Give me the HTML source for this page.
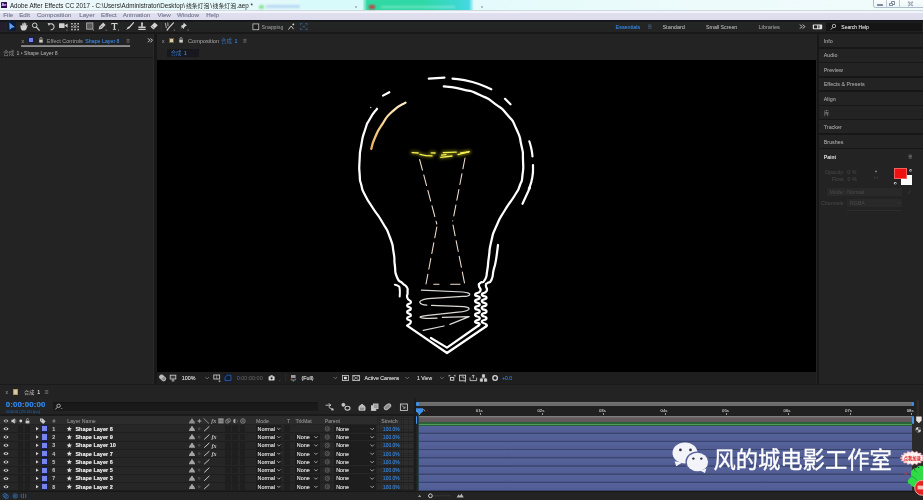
<!DOCTYPE html>
<html>
<head>
<meta charset="utf-8">
<title>Adobe After Effects CC 2017</title>
<style>
*{margin:0;padding:0;box-sizing:border-box}
html,body{width:923px;height:500px;overflow:hidden;background:#181818}
body{font-family:"Liberation Sans",sans-serif;font-size:5.6px;color:#9a9a9a;position:relative;line-height:1}
.a{position:absolute}
.t{position:absolute;white-space:nowrap;line-height:1;text-shadow:0 0 .45px currentColor}
#titlebar{left:0;top:0;width:923px;height:10px;background:linear-gradient(90deg,#eef7fb 0,#e4f9fa 250px,#dffafa 360px,#e6fbfb 520px,#edfbfb 700px,#f1fbfc 923px)}
#menubar{left:0;top:10px;width:923px;height:9.8px;background:linear-gradient(180deg,#cddadc 0,#cddadc .7px,#f5f5fc 1.1px,#f3f3fb 2.5px,#dfdfee 3.5px,#dcdcec 9.8px)}
#toolbar{left:0;top:19.8px;width:923px;height:12.2px;background:linear-gradient(180deg,#15161a 0,#15161a 1.4px,#242525 2px,#232323 12.2px)}
#leftp{left:0;top:33.5px;width:154px;height:350.3px;background:#232323}
#compp{left:157.3px;top:33.5px;width:659.5px;height:350.3px;background:#232323}
#rightp{left:819px;top:33.5px;width:104px;height:350.3px;background:#232323}
#viewer{left:157.3px;top:59.5px;width:659px;height:312.5px;background:#000}
#tl{left:0;top:385.2px;width:923px;height:114.8px;background:#232323}
svg{position:absolute;left:0;top:0;overflow:visible}
</style>
</head>
<body>
<div id="root" style="position:absolute;left:0;top:0;width:923px;height:500px;will-change:transform">
<div id="titlebar" class="a"></div>
<div id="menubar" class="a"></div>
<div id="toolbar" class="a"></div>
<div id="leftp" class="a"></div>
<div id="compp" class="a"></div>
<div id="rightp" class="a"></div>
<div id="viewer" class="a"></div>
<div id="tl" class="a"></div>
<svg style="filter:blur(.3px)" width="923" height="500" viewBox="0 0 923 500"><defs><linearGradient id="warm" gradientUnits="userSpaceOnUse" x1="405" y1="102" x2="371" y2="149"><stop offset="0" stop-color="#fdeecb"/><stop offset=".5" stop-color="#f7d596"/><stop offset="1" stop-color="#f0b458"/></linearGradient><filter id="glow" x="-30%" y="-300%" width="160%" height="700%"><feGaussianBlur stdDeviation="1.6"/></filter></defs><path d="M377.0 108.8C374.4 112.5 374.4 111.0 370.0 118.8C365.6 126.6 368.2 120.4 365.0 130.0C361.8 139.6 363.3 134.0 361.3 145.0C359.3 156.0 360.2 149.0 359.6 160.0C359.0 171.0 359.1 165.8 359.7 175.0C360.3 184.2 359.4 177.7 361.3 185.0C363.2 192.3 360.9 186.8 365.0 195.0C369.1 203.2 366.1 197.4 372.5 207.5C378.9 217.6 376.1 211.5 382.5 222.5C388.9 233.5 385.9 226.5 390.0 237.5C394.1 248.5 391.8 242.4 393.6 252.5C395.4 262.6 393.6 256.0 394.8 265.0C396.0 274.0 394.1 270.3 396.9 277.0C399.7 283.7 398.9 279.6 402.5 283.3C406.1 287.0 404.8 283.8 406.7 287.0C408.6 290.2 407.3 288.0 407.6 292.0C407.9 296.0 406.2 294.3 407.4 298.0C408.6 301.7 411.0 299.4 410.9 302.2C410.8 304.9 407.1 303.1 407.1 305.5C407.1 307.9 410.9 306.3 410.9 308.7C410.9 311.1 407.1 309.6 407.1 312.0C407.1 314.4 410.9 312.9 410.9 315.2C410.9 317.5 407.1 316.0 407.1 318.4C407.1 320.8 410.9 319.2 410.9 321.8C410.9 324.4 408.5 324.2 407.1 325.6L447 353 L485.6 326.8" fill="none" stroke="#ffffff" stroke-width="2.25" stroke-linecap="round" stroke-linejoin="round" />
<path d="M485.6 326.8C485.9 326.0 487.8 326.4 486.4 324.5C485.0 322.6 481.8 323.9 481.8 321.6C481.8 319.3 486.5 320.7 486.5 318.2C486.5 315.7 481.8 317.3 481.8 314.8C481.8 312.3 486.5 313.9 486.5 311.4C486.5 308.9 481.8 310.4 481.8 307.9C481.8 305.4 486.5 307.0 486.5 304.5C486.5 302.0 481.8 303.6 481.8 301.1C481.8 298.6 486.5 300.2 486.5 297.8C486.5 295.4 481.8 297.0 481.8 294.5C481.8 292.0 485.1 294.3 486.6 291.0C488.1 287.7 485.6 288.4 485.9 285.5C486.2 282.6 485.4 285.1 487.5 283.0C489.6 280.9 489.3 284.6 491.5 279.8C493.7 275.0 492.1 276.3 493.6 270.0C495.1 263.7 494.3 268.7 495.5 262.5C496.7 256.3 496.1 259.4 497.0 253.0C497.9 246.6 497.6 247.9 498.0 245.0" fill="none" stroke="#ffffff" stroke-width="2.25" stroke-linecap="round" stroke-linejoin="round" />
<path d="M430.9 338 L447 347.6 L478.6 325.5" fill="none" stroke="#ffffff" stroke-width="2.25" stroke-linecap="round" stroke-linejoin="round" />
<path d="M478.6 325.5C478.8 324.8 480.5 324.9 479.2 323.5C477.9 322.1 474.9 323.5 475.1 321.6C475.3 319.7 479.7 320.7 479.7 318.2C479.7 315.7 475.1 317.3 475.1 314.8C475.1 312.3 479.7 313.9 479.7 311.4C479.7 308.9 475.1 310.4 475.1 307.9C475.1 305.4 479.7 307.0 479.7 304.5C479.7 302.0 475.1 303.6 475.1 301.1C475.1 298.6 479.7 300.2 479.7 297.8C479.7 295.4 474.9 297.0 475.1 294.5C475.3 292.0 478.9 294.3 480.3 291.0C481.7 287.7 478.8 288.5 478.9 285.5C479.0 282.5 478.3 284.9 480.5 282.8C482.7 280.7 482.4 284.5 484.9 279.8C487.4 275.1 485.9 278.2 487.3 270.0C488.7 261.8 487.3 268.0 488.8 257.5C490.3 247.0 488.6 252.7 491.3 241.3C494.1 229.9 491.3 237.8 496.3 226.3C501.3 214.8 498.1 221.5 505.0 210.0C511.9 198.5 509.5 204.2 515.0 195.0C520.5 185.8 517.2 192.3 520.0 185.0C522.8 177.7 521.4 184.2 522.5 175.0C523.6 165.8 523.4 171.0 523.0 160.0C522.6 149.0 523.8 156.4 521.3 145.0C518.8 133.6 521.4 139.8 516.3 128.8C511.2 117.8 515.3 124.2 507.5 115.0C499.7 105.8 505.1 111.1 495.0 103.8C484.9 96.5 491.9 100.3 480.0 95.0C468.1 89.7 475.8 92.5 462.5 89.3C449.2 86.1 450.7 87.4 443.8 86.3" fill="none" stroke="#ffffff" stroke-width="2.25" stroke-linecap="round" stroke-linejoin="round" />
<path d="M394.8 284.7C396.0 285.2 396.7 284.7 398.3 286.1C399.9 287.5 399.2 285.5 399.7 289.0C400.2 292.5 399.7 294.1 399.7 296.6" fill="none" stroke="#ffffff" stroke-width="2.0" stroke-linecap="round" stroke-linejoin="round" />
<path d="M428.8 78.6 L444.5 77.6" fill="none" stroke="#ffffff" stroke-width="2.2" stroke-linecap="round" stroke-linejoin="round" />
<path d="M452.5 78.6C459.2 79.7 459.6 78.4 472.5 82.0C485.4 85.6 485.0 86.9 491.3 89.3" fill="none" stroke="#ffffff" stroke-width="2.2" stroke-linecap="round" stroke-linejoin="round" />
<path d="M505 98.8 L510.5 104.3" fill="none" stroke="#ffffff" stroke-width="2.2" stroke-linecap="round" stroke-linejoin="round" />
<path d="M383 95.6 L389.3 92.2" fill="none" stroke="#ffffff" stroke-width="2.2" stroke-linecap="round" stroke-linejoin="round" />
<path d="M370.6 107.4 L370.9 107.7" fill="none" stroke="#cccccc" stroke-width="1.2" stroke-linecap="round" stroke-linejoin="round" />
<path d="M529.3 141.3C530.0 143.7 530.2 143.5 531.3 148.5C532.4 153.5 532.1 153.7 532.5 156.3" fill="none" stroke="#ffffff" stroke-width="2.2" stroke-linecap="round" stroke-linejoin="round" />
<path d="M533.0 165.0C532.8 169.2 533.7 169.5 532.3 177.5C530.9 185.5 530.0 185.2 528.8 189.0" fill="none" stroke="#ffffff" stroke-width="2.2" stroke-linecap="round" stroke-linejoin="round" />
<path d="M530 187.5 L522.5 203.8" fill="none" stroke="#ffffff" stroke-width="2.2" stroke-linecap="round" stroke-linejoin="round" />
<path d="M405.5 102.6C401.2 105.5 400.2 104.2 392.5 111.3C384.8 118.4 388.3 115.1 382.5 123.8C376.7 132.5 378.7 129.2 375.0 137.5C371.3 145.8 372.5 145.0 371.3 148.8" fill="none" stroke="url(#warm)" stroke-width="2.3" stroke-linecap="round" stroke-linejoin="round" />
<path d="M419.6 159.5 L436.8 224" fill="none" stroke="#f2e0cf" stroke-width="1.05" stroke-linecap="round" stroke-linejoin="round" stroke-dasharray="11 5" stroke-linecap="butt"/>
<path d="M436.8 227 L426 284" fill="none" stroke="#f2e0cf" stroke-width="1.05" stroke-linecap="round" stroke-linejoin="round" stroke-dasharray="11 5"/>
<path d="M465 158 L452.8 221" fill="none" stroke="#f2e0cf" stroke-width="1.05" stroke-linecap="round" stroke-linejoin="round" stroke-dasharray="11 5"/>
<path d="M453 225 L464.5 283" fill="none" stroke="#f2e0cf" stroke-width="1.05" stroke-linecap="round" stroke-linejoin="round" stroke-dasharray="11 5"/>
<path d="M433.8 284.2 L439 284.2 M450.7 284.2 L460 284.2" fill="none" stroke="#f2e0cf" stroke-width="1.1" stroke-linecap="round" stroke-linejoin="round" stroke-linecap="butt"/>
<path d="M421.4 290.2 L462.8 292 Q470.6 292.8 469.6 294.8 Q468.4 296.5 462.8 296.3 L428 298.7 Q418.8 300.3 419.8 302.5 Q420.8 304.7 426.8 305.2" fill="none" stroke="#dcd8d4" stroke-width="1.25" stroke-linecap="round" stroke-linejoin="round" />
<path d="M431.6 305.4 L464 306.6 Q469.8 307.3 469 309.2 Q467.8 311.2 458 312.2 L428 315.4 Q419.2 316.2 420.2 317.3 Q421.4 318.7 437 318.2" fill="none" stroke="#dcd8d4" stroke-width="1.25" stroke-linecap="round" stroke-linejoin="round" />
<path d="M442.4 317.4 L469.2 316.7 L450 324.4" fill="none" stroke="#dcd8d4" stroke-width="1.25" stroke-linecap="round" stroke-linejoin="round" />
<path d="M444 326 L423.2 330.4" fill="none" stroke="#dcd8d4" stroke-width="1.25" stroke-linecap="round" stroke-linejoin="round" />
<g filter="url(#glow)"><path d="M412.1 152.6 L418.2 153" fill="none" stroke="#8a8a10" stroke-width="4" stroke-linecap="round" opacity="0.55"/><path d="M420 154.3 Q426 156 432 155.9" fill="none" stroke="#8a8a10" stroke-width="4" stroke-linecap="round" opacity="0.55"/><path d="M431.2 152.8 L435.1 153" fill="none" stroke="#8a8a10" stroke-width="4" stroke-linecap="round" opacity="0.55"/><path d="M443.3 152.6 L456.3 152.1" fill="none" stroke="#8a8a10" stroke-width="4" stroke-linecap="round" opacity="0.55"/><path d="M441.6 155.2 L446 154.7" fill="none" stroke="#8a8a10" stroke-width="4" stroke-linecap="round" opacity="0.55"/><path d="M440.7 157.3 L452 156" fill="none" stroke="#8a8a10" stroke-width="4" stroke-linecap="round" opacity="0.55"/><path d="M458 154.7 L469.3 151.7" fill="none" stroke="#8a8a10" stroke-width="4" stroke-linecap="round" opacity="0.55"/><path d="M460.7 153 L468.5 152" fill="none" stroke="#8a8a10" stroke-width="4" stroke-linecap="round" opacity="0.55"/></g>
<path d="M412.1 152.6 L418.2 153" fill="none" stroke="#f6ee55" stroke-width="1.3" stroke-linecap="round" stroke-linejoin="round" />
<path d="M420 154.3 Q426 156 432 155.9" fill="none" stroke="#f6ee55" stroke-width="1.3" stroke-linecap="round" stroke-linejoin="round" />
<path d="M431.2 152.8 L435.1 153" fill="none" stroke="#f6ee55" stroke-width="1.3" stroke-linecap="round" stroke-linejoin="round" />
<path d="M443.3 152.6 L456.3 152.1" fill="none" stroke="#f6ee55" stroke-width="1.3" stroke-linecap="round" stroke-linejoin="round" />
<path d="M441.6 155.2 L446 154.7" fill="none" stroke="#f6ee55" stroke-width="1.3" stroke-linecap="round" stroke-linejoin="round" />
<path d="M440.7 157.3 L452 156" fill="none" stroke="#f6ee55" stroke-width="1.3" stroke-linecap="round" stroke-linejoin="round" />
<path d="M458 154.7 L469.3 151.7" fill="none" stroke="#f6ee55" stroke-width="1.3" stroke-linecap="round" stroke-linejoin="round" />
<path d="M460.7 153 L468.5 152" fill="none" stroke="#f6ee55" stroke-width="1.3" stroke-linecap="round" stroke-linejoin="round" /></svg>
<!-- title bar content -->
<div class="a" style="left:362.4px;top:0;width:112px;height:10px;background:linear-gradient(90deg,rgba(46,217,160,0) 0,#30d9a2 5px,#2fd9a6 60px,#3cd8cf 95px,#46d8e4 107px,rgba(70,216,228,0) 112px);filter:blur(.6px)"></div>
<div class="a" style="left:369.2px;top:5px;width:5.6px;height:4.4px;background:#b8484a;filter:blur(.8px)"></div>
<div class="a" style="left:381px;top:5.8px;width:74px;height:2.4px;background:rgba(255,255,255,.3);filter:blur(1px)"></div>
<div class="a" style="left:259px;top:4.5px;width:4.5px;height:4px;background:#7fe08a;filter:blur(.9px);border-radius:2px"></div>
<div class="a" style="left:266px;top:5px;width:34px;height:2.5px;background:rgba(150,190,235,.55);filter:blur(1px)"></div>
<div class="a" style="left:300px;top:0;width:63px;height:9px;background:rgba(215,250,250,.8)"></div>
<div class="a" style="left:355px;top:6px;width:2px;height:2px;background:#b4bccc;filter:blur(.7px)"></div>
<div class="a" style="left:480.8px;top:6px;width:2px;height:2px;background:#b4bccc;filter:blur(.7px)"></div>
<div class="a" style="left:.5px;top:2px;width:6.6px;height:6px;background:#2b0c4d;border-radius:.6px"></div>
<div class="t" style="left:1.5px;top:3.3px;font-size:4px;font-weight:bold;color:#c9a7f5;letter-spacing:-.2px">Ae</div>
<svg width="923" height="20" viewBox="0 0 923 20">
<g fill="#1a1a1a" style="font-family:'Liberation Sans',sans-serif;font-size:6.27px">
<text x="9.9" y="7.6">Adobe After Effects CC 2017 - C:\Users\Administrator\Desktop\</text>
<text x="210.3" y="7.6">\</text>
<text x="236.6" y="7.6">.aep *</text>
</g>
<text x="185.9" y="7.6" font-size="5.87" fill="#1a1a1a" style="font-family:'Liberation Sans','Noto Sans CJK SC',sans-serif">线条灯泡</text>
<text x="212.6" y="7.6" font-size="5.87" fill="#1a1a1a" style="font-family:'Liberation Sans','Noto Sans CJK SC',sans-serif">线条灯泡</text>
</svg>
<!-- window buttons -->
<div class="a" style="left:872.8px;top:-1px;width:51px;height:9.1px;border:.7px solid #aebccb;border-radius:0 0 0 2.2px;background:linear-gradient(180deg,#f9fdfe,#eef6fa)"></div>
<div class="a" style="left:886.2px;top:0;width:.7px;height:8px;background:#bcc8d4"></div>
<div class="a" style="left:899.2px;top:0;width:.7px;height:8px;background:#bcc8d4"></div>
<div class="a" style="left:877px;top:3.8px;width:5.6px;height:2.3px;border:.6px solid #7f8b9b;border-radius:.5px;background:#fff"></div>
<div class="a" style="left:890.6px;top:1.2px;width:4px;height:3.8px;border:.6px solid #7f8b9b;border-radius:.4px"></div>
<div class="a" style="left:889.3px;top:2.6px;width:4px;height:3.8px;border:.6px solid #7f8b9b;border-radius:.4px;background:#f4fafc"></div>
<svg width="923" height="10" viewBox="0 0 923 10"><path d="M908.2 1.6 l4.6 4.4 m0 -4.4 l-4.6 4.4" stroke="#7f8b9b" stroke-width="1.5" fill="none"/><path d="M908.2 1.6 l4.6 4.4 m0 -4.4 l-4.6 4.4" stroke="#fbfdff" stroke-width=".6" fill="none"/></svg>
<!-- menu -->
<div class="t mn" style="left:3.3px">File</div>
<div class="t mn" style="left:19.2px">Edit</div>
<div class="t mn" style="left:36.9px">Composition</div>
<div class="t mn" style="left:79.2px">Layer</div>
<div class="t mn" style="left:101px">Effect</div>
<div class="t mn" style="left:122.8px">Animation</div>
<div class="t mn" style="left:157.5px">View</div>
<div class="t mn" style="left:177px">Window</div>
<div class="t mn" style="left:206.3px">Help</div>
<style>.mn{top:12px;font-size:6.2px;color:#8489a0}</style>

<svg width="923" height="36" viewBox="0 0 923 36">
<!-- selection arrow (blue) -->
<rect x="7.4" y="21.3" width="8.6" height="9.8" rx="1" fill="#0c1d3c"/><path d="M9.3 22.4 L14.9 27.3 L11.9 27.7 L9.6 30 Z" fill="#62a2f0"/><rect x="0" y="22" width="6" height="9" fill="#241c2c" opacity=".7"/>
<!-- hand -->
<path d="M20.3 25.6 l1 -.6 l.9 1.6 l.1 -3.3 l1 -.1 l.2 2.6 l.3 -3.2 l1 0 l.1 3.3 l.5 -2.8 l.9 .2 l-.2 3.2 l.8 -1.6 l.8 .4 l-1.2 3.4 q-.5 1.6 -2 1.7 l-2 0 q-1 -.2 -1.6 -1.4 Z" fill="#d4d4d4"/>
<!-- zoom -->
<circle cx="34.7" cy="25.3" r="2.3" fill="none" stroke="#cfcfcf" stroke-width="1"/>
<path d="M36.4 27.2 L39.2 30.2" stroke="#cfcfcf" stroke-width="1.2" stroke-linecap="round"/>
<!-- rotate -->
<path d="M49.2 24.4 A3 3 0 1 1 50.6 29.7" fill="none" stroke="#c8c8c8" stroke-width="1.1"/>
<path d="M47.6 23 L50.4 23.2 L48.9 25.9 Z" fill="#c8c8c8"/>
<!-- camera -->
<rect x="59" y="23.3" width="5.6" height="4.6" rx=".6" fill="#d0d0d0"/>
<path d="M64.6 25.6 L67.6 23.4 L67.6 27.8 Z" fill="#d0d0d0"/>
<rect x="66.5" y="29.6" width="1" height="1" fill="#999"/>
<!-- pan behind -->
<g fill="#cccccc"><rect x="71.2" y="23" width="1.5" height="1.5"/><rect x="74.3" y="23" width="1.5" height="1.5"/><rect x="77.4" y="23" width="1.5" height="1.5"/><rect x="71.2" y="28.8" width="1.5" height="1.5"/><rect x="74.3" y="28.8" width="1.5" height="1.5"/><rect x="77.4" y="28.8" width="1.5" height="1.5"/><rect x="71.2" y="25.9" width="1.5" height="1.5"/><rect x="77.4" y="25.9" width="1.5" height="1.5"/><path d="M73.6 25.2 l2.8 2.8 m0 -2.8 l-2.8 2.8" stroke="#ccc" stroke-width=".9"/></g>
<!-- rect -->
<rect x="86.6" y="22.9" width="6.3" height="6.3" fill="#5a5a5a" stroke="#a8a8a8" stroke-width=".9"/>
<rect x="93" y="29.6" width="1" height="1" fill="#999"/>
<!-- pen -->
<path d="M98.6 29.6 L99.4 26.4 L103.2 22.6 L105.6 25 L101.8 28.8 Z" fill="#d0d0d0"/>
<path d="M100.6 27.6 L102.4 25.8" stroke="#222" stroke-width=".7"/>
<rect x="105.6" y="29.6" width="1" height="1" fill="#999"/>
<!-- T -->
<path d="M111.3 22.9 H117.6 V24.5 H117 V23.9 H115.1 V29 H116 V29.8 H112.9 V29 H113.8 V23.9 H111.9 V24.5 H111.3 Z" fill="#d6d6d6"/>
<rect x="118" y="29.6" width="1" height="1" fill="#999"/>
<!-- brush -->
<path d="M133.4 22.6 L129.4 27 L128.2 26.6 L126.2 29.8 L129.6 28.2 L129.8 27.4 Z" fill="#d8d8d8"/>
<path d="M133.5 22.7 L129.6 27.2" stroke="#d8d8d8" stroke-width="1.1" stroke-linecap="round"/>
<!-- stamp -->
<path d="M141 22.6 h2 l-.3 4 h2.9 v1.6 h-7.2 v-1.6 h2.9 Z M138.3 29 h7.4 v.9 h-7.4 Z" fill="#d0d0d0"/>
<!-- eraser -->
<path d="M150.4 26.8 L154.6 22.6 L157.8 25.2 L153.6 29.6 Z" fill="#d4d4d4"/>
<path d="M151.6 25.8 L154.8 28.6" stroke="#555" stroke-width=".6"/>
<line x1="161.3" y1="22" x2="161.3" y2="31" stroke="#3a3a3a" stroke-width=".7"/>
<!-- roto -->
<path d="M173.4 22.8 L168.4 28.4 L167.2 30.2" stroke="#d0d0d0" stroke-width="1.2" stroke-linecap="round" fill="none"/>
<path d="M165.2 22.8 l1.2 5.4 m1.4 -5.8 l.2 3.8" stroke="#bdbdbd" stroke-width=".9" fill="none"/>
<rect x="173.8" y="29.6" width="1" height="1" fill="#999"/>
<!-- pin -->
<path d="M183.6 22.6 L187 25.8 L185.6 26 L184.2 27.6 L183.8 29 L182.2 27.6 L180.2 29.8 L181.8 27.2 L180.8 25.8 L182.2 25.6 L183.6 24 Z" fill="#d2d2d2"/>
<rect x="187.6" y="29.6" width="1" height="1" fill="#999"/>
<!-- snapping -->
<rect x="252.9" y="23.9" width="5.8" height="5.8" fill="#1a1a1a" stroke="#b4b4b4" stroke-width=".9"/>
<path d="M288.4 29.6 L291.2 26 L293.6 29.2" fill="none" stroke="#c8c8c8" stroke-width="1"/>
<circle cx="293.3" cy="24.4" r=".9" fill="#ddd"/>
<path d="M300.4 23.4 h2 m2.8 0 h2 M300.4 29.6 h2 m2.8 0 h2 M300.6 23.4 v2 m0 2.4 v2 M307 23.4 v2 m0 2.4 v2 M302.6 25.4 l2.4 2.4 m0 -2.4 l-2.4 2.4" stroke="#3d5f8a" stroke-width=".8" fill="none"/>
<!-- workspace menu icon -->
<path d="M648 25 h3.6 M648 26.6 h3.6 M648 28.2 h3.6" stroke="#4a6a94" stroke-width=".7"/>
<path d="M800 24.6 l2 2 l-2 2 M802.8 24.6 l2 2 l-2 2" fill="none" stroke="#e6e6e6" stroke-width=".9"/>
<rect x="812.8" y="24.4" width="9.4" height="4.9" rx=".8" fill="#e0e0e0"/>
<rect x="814" y="25.4" width="3.2" height="2.9" fill="#222"/><rect x="818.4" y="25.4" width="1" height="2.9" fill="#222"/>
<rect x="826" y="22.6" width="96" height="8.6" fill="#151515"/>
<circle cx="834" cy="26" r="1.7" fill="none" stroke="#c8c8c8" stroke-width=".8"/>
<path d="M832.8 27.4 L830.8 29.6" stroke="#c8c8c8" stroke-width=".9"/>
</svg>
<div class="t" style="left:261.6px;top:25px;font-size:5.15px;color:#7d7d7d">Snapping</div>
<div class="t" style="left:615.6px;top:25px;font-size:5.4px;color:#3277c0">Essentials</div>
<div class="t" style="left:662.4px;top:25px;font-size:5.55px;color:#989898">Standard</div>
<div class="t" style="left:706px;top:25px;font-size:5.25px;color:#989898">Small Screen</div>
<div class="t" style="left:758.4px;top:25px;font-size:5.6px;color:#808080">Libraries</div>
<div class="t" style="left:841.3px;top:25px;font-size:5px;color:#c4c4c4">Search Help</div>

<!-- left panel: effect controls -->
<div class="t" style="left:21.6px;top:39px;font-size:5px;color:#7a7a7a">x</div>
<div class="a" style="left:27.5px;top:36.6px;width:6px;height:6.9px;background:#7682e6;border:.7px solid #151c52"></div>
<svg width="160" height="60" viewBox="0 0 160 60">
<path d="M39.2 39.7 h3.5 v2.9 h-3.5 Z" fill="#cfcfc4"/><path d="M39.9 39.7 v-1.1 a1.05 1.05 0 0 1 2.1 0 v1.1" fill="none" stroke="#cfcfc4" stroke-width=".7"/>
<path d="M126.6 39.4 h3 M126.6 40.8 h3 M126.6 42.2 h3" stroke="#8a8a8a" stroke-width=".6"/>
<path d="M148 38.4 l1.9 1.9 l-1.9 1.9 M150.6 38.4 l1.9 1.9 l-1.9 1.9" fill="none" stroke="#e8e8e8" stroke-width=".9"/>
<rect x="21.1" y="45.4" width="109" height="1.3" fill="#bcbcbc"/>
<rect x="0" y="57" width="154" height="1" fill="#1a1a1a"/>
<text x="3.2" y="54.9" font-size="5.6" fill="#8c8c8c" style="font-family:'Liberation Sans','Noto Sans CJK SC',sans-serif">合成</text>
</svg>
<div class="t" style="left:46.8px;top:39px;font-size:5.5px;color:#7a7a7a">Effect Controls</div>
<div class="t" style="left:85.3px;top:39px;font-size:5.27px;color:#3676c0">Shape Layer 8</div>
<div class="t" style="left:16.4px;top:51px;font-size:5.2px;color:#8c8c8c">1 • Shape Layer 8</div>
<!-- panel edge --><div class="a" style="left:152.8px;top:33.5px;width:1.2px;height:350px;background:#2a2a2a"></div>

<!-- comp panel header -->
<div class="t" style="left:162px;top:39px;font-size:5px;color:#7a7a7a">x</div>
<div class="a" style="left:168.5px;top:37.8px;width:5px;height:5.2px;background:#dccda6;border:.45px solid #7a5e38"></div>
<div class="a" style="left:167px;top:48.8px;width:32px;height:7.8px;background:#17181e"></div>
<svg width="400" height="60" viewBox="0 0 400 60">
<path d="M179.3 39.7 h3.5 v2.9 h-3.5 Z" fill="#cfcfc4"/><path d="M180 39.7 v-1.1 a1.05 1.05 0 0 1 2.1 0 v1.1" fill="none" stroke="#cfcfc4" stroke-width=".7"/>
<path d="M243.4 39.4 h3 M243.4 40.8 h3 M243.4 42.2 h3" stroke="#8a8a8a" stroke-width=".6"/>
<text x="221" y="43" font-size="5.4" fill="#3676c0" style="font-family:'Liberation Sans','Noto Sans CJK SC',sans-serif">合成</text>
<text x="170.7" y="54.7" font-size="5.4" fill="#3676c0" style="font-family:'Liberation Sans','Noto Sans CJK SC',sans-serif">合成</text>
</svg>
<div class="t" style="left:188px;top:39px;font-size:5.6px;color:#808080">Composition</div>
<div class="t" style="left:234.6px;top:39px;font-size:5.3px;color:#3676c0">1</div>
<div class="t" style="left:184px;top:51px;font-size:5.3px;color:#3676c0">1</div>

<!-- right panel -->
<style>.rp{left:823.8px;font-size:5.33px;color:#8c8c8c}.rs{left:819px;width:104px;height:1.5px;background:#171717}</style>
<div class="t rp" style="top:39px">Info</div>
<div class="a rs" style="top:47.2px"></div>
<div class="t rp" style="top:53px">Audio</div>
<div class="a rs" style="top:61.6px"></div>
<div class="t rp" style="top:68px">Preview</div>
<div class="a rs" style="top:76px"></div>
<div class="t rp" style="top:82px">Effects &amp; Presets</div>
<div class="a rs" style="top:90.4px"></div>
<div class="t rp" style="top:97px">Align</div>
<div class="a rs" style="top:104.8px"></div>
<div class="a rs" style="top:118.8px"></div>
<div class="t rp" style="top:125px">Tracker</div>
<div class="a rs" style="top:133.2px"></div>
<div class="t rp" style="top:140px">Brushes</div>
<div class="a rs" style="top:147.6px"></div>
<div class="t rp" style="top:154.6px;color:#d2d2d2">Paint</div>
<div class="t" style="left:825px;top:170px;font-size:5.3px;color:#3d3d3d">Opacity:&nbsp; 0 %</div>
<div class="t" style="left:831.9px;top:177px;font-size:5.3px;color:#3d3d3d">Flow:&nbsp; 0 %</div>
<div class="a" style="left:826.6px;top:188.2px;width:75px;height:8px;background:#292929"></div>
<div class="t" style="left:829.5px;top:190px;font-size:5.3px;color:#404040">Mode:&nbsp; Normal</div>
<div class="t" style="left:821px;top:201px;font-size:5.3px;color:#3d3d3d">Channels:</div>
<div class="a" style="left:847.4px;top:199.4px;width:55px;height:7.2px;background:#292929"></div>
<div class="t" style="left:850px;top:201px;font-size:5.2px;color:#404040">RGBA</div>
<div class="a" style="left:847.4px;top:210.2px;width:55px;height:.8px;background:#2c2c2c"></div>
<div class="a" style="left:900.6px;top:174.6px;width:11.8px;height:10.8px;background:#fdfdfd"></div>
<div class="a" style="left:894.2px;top:168.2px;width:12.8px;height:11.2px;background:#ee1111;border:.7px solid #f0605c"></div>
<svg width="923" height="230" viewBox="0 0 923 230">
<text x="823.7" y="115.2" font-size="5.5" fill="#9a9a9a" style="font-family:'Liberation Sans','Noto Sans CJK SC',sans-serif">库</text>
<path d="M908.6 155.2 h3.2 M908.6 156.6 h3.2 M908.6 158 h3.2" stroke="#9a9a9a" stroke-width=".6"/>
<circle cx="876" cy="171.4" r=".9" fill="#8a8a8a"/>
<path d="M874.6 179.3 v-2.6 l1.4 1.6 l1.4 -1.6 v2.6" fill="none" stroke="#3c3c3c" stroke-width=".6"/>
<circle cx="910.6" cy="170.4" r="1.3" fill="#c8c8c8"/><circle cx="910.9" cy="170.8" r=".7" fill="#223"/>
<circle cx="895.2" cy="183.3" r="1.3" fill="#c8c8c8"/><circle cx="895.5" cy="183.7" r=".7" fill="#223"/>
<path d="M907.6 194 l3 -3.4" stroke="#3c3c3c" stroke-width=".9"/>
<path d="M897.5 202.2 l1.2 1.2 l1.2 -1.2" stroke="#3a3a3a" stroke-width=".6" fill="none"/>
</svg>

<!-- viewer bottom toolbar -->
<div class="a" style="left:157.3px;top:372px;width:659px;height:11.7px;background:#1e1e1e"></div>
<svg width="923" height="400" viewBox="0 0 923 400">
<g fill="none" stroke="#c4c4c4" stroke-width=".9">
<circle cx="161.6" cy="377" r="2.1" fill="#bdbdbd"/><circle cx="163.6" cy="378.8" r="2.1" fill="#8a8a8a"/>
<rect x="170.2" y="375.2" width="5.6" height="3.8" fill="#3a3a3a"/><path d="M171.6 380.9 h2.8 M173 379 v1.8"/>
<path d="M205.2 377 l1.9 1.9 l1.9 -1.9" stroke="#7c7c7c" stroke-width=".8"/>
<rect x="213.8" y="375" width="5.8" height="4" /><path d="M216.7 375 v4 M219 380.6 l1.3 .6 l-1.3 .6 Z" stroke-width=".6"/>
<rect x="223.6" y="374.2" width="8.6" height="7.6" fill="#0f1b30" stroke="none"/>
<path d="M225 380.6 v-3.4 l2.2 -2 h3.8 v5.4 Z" stroke="#3164b4" stroke-width=".8"/>
<path d="M333.6 377 l1.8 1.8 l1.8 -1.8" stroke="#7c7c7c" stroke-width=".8"/>
<rect x="342.4" y="375.4" width="6" height="5.2" stroke="#cfcfcf" stroke-width=".8"/><rect x="344" y="376.8" width="2.8" height="2.4" fill="#e0e0e0" stroke="none"/>
<rect x="352.8" y="375.4" width="6.6" height="5.2" stroke="#cfcfcf" stroke-width=".8"/><path d="M353 375.6 l3 2.4 l-3 2.4 M359.2 375.6 l-3 2.4 l3 2.4" stroke-width=".7"/>
<path d="M405.4 377 l1.8 1.8 l1.8 -1.8" stroke="#7c7c7c" stroke-width=".8"/>
<path d="M440.2 377 l1.8 1.8 l1.8 -1.8" stroke="#7c7c7c" stroke-width=".8"/>
<rect x="450.4" y="377.4" width="3.4" height="2.8" stroke="#d4d4d4" stroke-width=".9"/><path d="M448.8 375.4 h1.6 m3.4 0 h1.6 M449 375.4 v1.2 M455.2 375.4 v1.2" stroke-width=".8"/>
<rect x="459.6" y="375.2" width="6" height="5.6" stroke="#d4d4d4" stroke-width=".9"/><path d="M461.4 377 h2.6 v2.2 M464.6 381.6 l1.3 .4" stroke-width=".8"/>
<path d="M470 377.6 v3 h6.6 v-3 M473.3 375 v3.4 M472 376.2 l1.3 -1.3 l1.3 1.3" stroke-width=".9"/>
<rect x="482.4" y="374.8" width="2.2" height="2.2" fill="#d8d8d8"/><rect x="480.3" y="379" width="2.2" height="2.2" fill="#d8d8d8"/><rect x="484.5" y="379" width="2.2" height="2.2" fill="#d8d8d8"/><path d="M483.5 377 v1 M481.4 379 v-1 h4.2 v1" stroke-width=".6"/>
<circle cx="495.1" cy="378" r="2.3" stroke="#d8d8d8" stroke-width="1.3"/>
</g>
<rect x="268.6" y="376.2" width="6" height="4.2" rx=".6" fill="#d8d8d8"/><rect x="270.4" y="375.3" width="2.4" height="1.2" fill="#d8d8d8"/><circle cx="271.6" cy="378.3" r="1.1" fill="#1d1d1d"/>
<rect x="279.4" y="380" width=".8" height=".8" fill="#666"/>
<line x1="285.6" y1="374" x2="285.6" y2="382" stroke="#2c2c2c" stroke-width=".7"/>
<path d="M291 375 h4.6 v3 h-4.6 Z" fill="#9a9a9a"/><circle cx="291.6" cy="379.6" r="1" fill="#d44"/><circle cx="293.4" cy="380.4" r="1" fill="#4b4"/><circle cx="295.2" cy="379.6" r="1" fill="#46d"/>
</svg>
<div class="t" style="left:181.8px;top:376px;font-size:5.3px;color:#c8c8c8">100%</div>
<div class="t" style="left:236.7px;top:376px;font-size:5.5px;color:#505050"><span style="color:#35557e">0</span>:00:00:00</div>
<div class="t" style="left:301.4px;top:376px;font-size:5.4px;color:#c8c8c8">(Full)</div>
<div class="t" style="left:364.5px;top:376px;font-size:5.26px;color:#c8c8c8">Active Camera</div>
<div class="t" style="left:416.9px;top:376px;font-size:5.1px;color:#c8c8c8">1 View</div>
<div class="t" style="left:502px;top:376px;font-size:5.1px;color:#2f6ab4">+0.0</div>

<div class="a" style="left:416px;top:397px;width:507px;height:94px;background:#232323"></div>
<div class="a" style="left:912px;top:416px;width:11px;height:75px;background:#2a2a2a"></div>
<div class="a" style="left:417px;top:402px;width:496px;height:3.6px;background:linear-gradient(180deg,#7a7a7a 0,#6c6c6c 35%,#6a6a6a 100%)"></div>
<div class="a" style="left:416px;top:401.6px;width:3px;height:4.4px;background:#3f8fe4;border-radius:1px"></div>
<div class="a" style="left:911.6px;top:401.6px;width:2.8px;height:4.4px;background:#3f8fe4;border-radius:1px"></div>
<div class="a" style="left:416px;top:406.3px;width:498px;height:9.6px;background:#202020"></div>
<div class="a" style="left:418.6px;top:413px;width:.7px;height:2.4px;background:#9a9a9a"></div>
<div class="a" style="left:480.1px;top:413px;width:.7px;height:2.4px;background:#9a9a9a"></div>
<div class="t" style="left:475.8px;top:409px;font-size:4.3px;color:#b4b4b4">01s</div>
<div class="a" style="left:541.7px;top:413px;width:.7px;height:2.4px;background:#9a9a9a"></div>
<div class="t" style="left:537.4px;top:409px;font-size:4.3px;color:#b4b4b4">02s</div>
<div class="a" style="left:603.2px;top:413px;width:.7px;height:2.4px;background:#9a9a9a"></div>
<div class="t" style="left:598.9px;top:409px;font-size:4.3px;color:#b4b4b4">03s</div>
<div class="a" style="left:664.8px;top:413px;width:.7px;height:2.4px;background:#9a9a9a"></div>
<div class="t" style="left:660.5px;top:409px;font-size:4.3px;color:#b4b4b4">04s</div>
<div class="a" style="left:726.4px;top:413px;width:.7px;height:2.4px;background:#9a9a9a"></div>
<div class="t" style="left:722.0px;top:409px;font-size:4.3px;color:#b4b4b4">05s</div>
<div class="a" style="left:787.9px;top:413px;width:.7px;height:2.4px;background:#9a9a9a"></div>
<div class="t" style="left:783.6px;top:409px;font-size:4.3px;color:#b4b4b4">06s</div>
<div class="a" style="left:849.5px;top:413px;width:.7px;height:2.4px;background:#9a9a9a"></div>
<div class="t" style="left:845.1px;top:409px;font-size:4.3px;color:#b4b4b4">07s</div>
<div class="a" style="left:911.0px;top:413px;width:.7px;height:2.4px;background:#9a9a9a"></div>
<div class="t" style="left:906.7px;top:409px;font-size:4.3px;color:#b4b4b4">08s</div>
<div class="a" style="left:418px;top:416.2px;width:494px;height:6.4px;background:linear-gradient(180deg,#848282 0,#7e7b7b 12%,#665a5e 26%,#62575a 100%)"></div>
<div class="a" style="left:416.2px;top:416.2px;width:2.3px;height:7.4px;background:#4a96e8;border-radius:1px"></div>
<div class="a" style="left:911.8px;top:416.2px;width:2.3px;height:7.4px;background:#4a96e8;border-radius:1px"></div>
<div class="a" style="left:418.6px;top:421.9px;width:493.4px;height:4px;background:linear-gradient(180deg,#2c5f38 0,#2b6236 38%,#4b9c59 52%,#4b9c59 70%,#2a5e3a 84%,#2f5c4a 100%)"></div>
<div class="a" style="left:418.6px;top:425.7px;width:493.4px;height:64.9px;background:repeating-linear-gradient(180deg,#56639b 0,#546098 2.5px,#515d94 6.2px,#3a456e 7px,#3a456e 7.7px,#56639b 8.18px)"></div>
<div class="a" style="left:416.6px;top:414px;width:2.2px;height:77px;background:#1d2a2c"></div>
<div class="a" style="left:417.5px;top:414px;width:.8px;height:77px;background:#23434f"></div>
<div class="a" style="left:0;top:492px;width:923px;height:8px;background:#232323"></div>
<svg width="923" height="500" viewBox="0 0 923 500">
<path d="M416 408.2 h7 v3 l-3.5 3.6 l-3.5 -3.6 Z" fill="#3f8fe4"/>
<path d="M423.4 409 l1.6 2.4" stroke="#c8c8c8" stroke-width=".7"/><path d="M426.6 409.6 l2.4 3" stroke="#6a2020" stroke-width=".8"/>
<rect x="917.6" y="400" width=".9" height="17" fill="#46382f"/>
<path d="M916.2 416.6 h5.4 v4 l-2.7 2.6 l-2.7 -2.6 Z" fill="#e8e0dc"/>
<circle cx="918.3" cy="429.8" r="2.7" fill="#cfcfcf"/><path d="M918.3 427.1 a2.7 2.7 0 0 1 2.7 2.7 h-2.7 Z M918.3 429.8 v2.7 a2.7 2.7 0 0 1 -2.7 -2.7 Z" fill="#3a3a3a"/>
<path d="M418 497 l1.6 -2.2 l1.6 2.2 Z" fill="#9a9a9a"/><circle cx="430.4" cy="495.8" r="1.9" fill="none" stroke="#d0d0d0" stroke-width="1"/><path d="M433 495.8 h18" stroke="#3c3c3c" stroke-width=".8"/><path d="M456.6 497.6 l2 -3.4 l1.4 1.8 l1.4 -2.6 l2.4 4.2 Z" fill="#b4b4b4"/>
</svg>
<div class="a" style="left:0;top:383.7px;width:923px;height:1.6px;background:#1a1a1a"></div>
<div class="t" style="left:5.6px;top:390px;font-size:5px;color:#7a7a7a">x</div>
<div class="a" style="left:12.7px;top:389.4px;width:5.3px;height:5.2px;background:#d9caa4;border:.5px solid #b8925a"></div>
<div class="t" style="left:37.2px;top:390px;font-size:5.4px;color:#c8c8c8">1</div>
<div class="t" style="left:5.7px;top:401px;font-size:7.9px;font-weight:bold;color:#2d7fd8;letter-spacing:.12px">0:00:00:00</div>
<div class="t" style="left:5.9px;top:410px;font-size:4.4px;color:#20507e">00000 (25.00 fps)</div>
<div class="a" style="left:52.8px;top:402.4px;width:264.8px;height:8.3px;background:linear-gradient(180deg,#141414 0,#191919 2px,#1a1a1a 100%)"></div>
<div class="a" style="left:0;top:414.3px;width:415.5px;height:1.5px;background:#1a1a1a"></div>
<div class="a" style="left:0;top:415.8px;width:415.5px;height:8.7px;background:#2c2c2c"></div>
<div class="a" style="left:0;top:424.6px;width:415.5px;height:66px;background:#262626"></div>
<div class="a" style="left:376.6px;top:416.6px;width:38px;height:74px;background:repeating-linear-gradient(90deg,rgba(0,0,0,.13) 0,rgba(0,0,0,.13) .6px,transparent .6px,transparent 2.4px),repeating-linear-gradient(180deg,rgba(0,0,0,.13) 0,rgba(0,0,0,.13) .6px,transparent .6px,transparent 2.4px),#2d2d2d"></div>
<div class="a" style="left:414.2px;top:398px;width:2px;height:93px;background:#1b1b1b"></div>
<div class="t" style="left:52.6px;top:419px;font-size:5.2px;color:#7e7e7e">#</div>
<div class="t" style="left:67.3px;top:419px;font-size:5.23px;color:#7e7e7e">Layer Name</div>
<div class="t" style="left:256px;top:419px;font-size:5.2px;color:#7e7e7e">Mode</div>
<div class="t" style="left:287px;top:419px;font-size:5.2px;color:#7e7e7e">T</div>
<div class="t" style="left:295.4px;top:419px;font-size:5.33px;color:#7e7e7e">TrkMat</div>
<div class="t" style="left:324.8px;top:419px;font-size:5.16px;color:#7e7e7e">Parent</div>
<div class="t" style="left:381.3px;top:419px;font-size:5.18px;color:#7e7e7e">Stretch</div>
<div class="a" style="left:0;top:432.44px;width:415.5px;height:.7px;background:#1e1e1e"></div>
<div class="a" style="left:17.6px;top:425.27px;width:5px;height:6.87px;background:#1f1f1f"></div>
<div class="a" style="left:24.6px;top:425.27px;width:5.6px;height:6.87px;background:#1f1f1f"></div>
<div class="a" style="left:225.4px;top:425.27px;width:5.4px;height:6.87px;background:#1f1f1f"></div>
<div class="a" style="left:232.4px;top:425.27px;width:5.6px;height:6.87px;background:#1f1f1f"></div>
<div class="a" style="left:239.9px;top:425.27px;width:5.6px;height:6.87px;background:#1f1f1f"></div>
<div class="a" style="left:284.2px;top:425.27px;width:5.7px;height:6.87px;background:#1f1f1f"></div>
<div class="a" style="left:256px;top:425.27px;width:24.7px;height:6.87px;background:#1d1d1d"></div>
<div class="t" style="left:257.5px;top:427px;font-size:5.43px;color:#d0d0d0">Normal</div>
<div class="a" style="left:334.4px;top:425.27px;width:41.6px;height:6.87px;background:#1d1d1d"></div>
<div class="t" style="left:336.2px;top:427px;font-size:5.4px;color:#d0d0d0">None</div>
<div class="t" style="left:383px;top:428px;font-size:4.9px;color:#3474c0">100.0%</div>
<div class="a" style="left:41.3px;top:425.20px;width:7.2px;height:7.2px;background:#7584ee;border:.65px solid #18205a"></div>
<div class="t" style="left:52.2px;top:427px;font-size:5.4px;color:#a6a6a6;font-weight:bold">1</div>
<div class="t" style="left:75.4px;top:427px;font-size:5.5px;color:#dadada;font-weight:bold">Shape Layer 8</div>
<div class="a" style="left:0;top:440.70px;width:415.5px;height:.7px;background:#1e1e1e"></div>
<div class="a" style="left:17.6px;top:433.54px;width:5px;height:6.87px;background:#1f1f1f"></div>
<div class="a" style="left:24.6px;top:433.54px;width:5.6px;height:6.87px;background:#1f1f1f"></div>
<div class="a" style="left:225.4px;top:433.54px;width:5.4px;height:6.87px;background:#1f1f1f"></div>
<div class="a" style="left:232.4px;top:433.54px;width:5.6px;height:6.87px;background:#1f1f1f"></div>
<div class="a" style="left:239.9px;top:433.54px;width:5.6px;height:6.87px;background:#1f1f1f"></div>
<div class="a" style="left:284.2px;top:433.54px;width:5.7px;height:6.87px;background:#1f1f1f"></div>
<div class="a" style="left:256px;top:433.54px;width:24.7px;height:6.87px;background:#1d1d1d"></div>
<div class="t" style="left:257.5px;top:435px;font-size:5.43px;color:#d0d0d0">Normal</div>
<div class="a" style="left:295px;top:433.54px;width:24.6px;height:6.87px;background:#1d1d1d"></div>
<div class="t" style="left:296.8px;top:435px;font-size:5.4px;color:#d0d0d0">None</div>
<div class="a" style="left:334.4px;top:433.54px;width:41.6px;height:6.87px;background:#1d1d1d"></div>
<div class="t" style="left:336.2px;top:435px;font-size:5.4px;color:#d0d0d0">None</div>
<div class="t" style="left:383px;top:436px;font-size:4.9px;color:#3474c0">100.0%</div>
<div class="a" style="left:41.3px;top:433.47px;width:7.2px;height:7.2px;background:#7584ee;border:.65px solid #18205a"></div>
<div class="t" style="left:52.2px;top:435px;font-size:5.4px;color:#a6a6a6;font-weight:bold">2</div>
<div class="t" style="left:75.4px;top:435px;font-size:5.5px;color:#dadada;font-weight:bold">Shape Layer 9</div>
<div class="a" style="left:0;top:448.98px;width:415.5px;height:.7px;background:#1e1e1e"></div>
<div class="a" style="left:17.6px;top:441.81px;width:5px;height:6.87px;background:#1f1f1f"></div>
<div class="a" style="left:24.6px;top:441.81px;width:5.6px;height:6.87px;background:#1f1f1f"></div>
<div class="a" style="left:225.4px;top:441.81px;width:5.4px;height:6.87px;background:#1f1f1f"></div>
<div class="a" style="left:232.4px;top:441.81px;width:5.6px;height:6.87px;background:#1f1f1f"></div>
<div class="a" style="left:239.9px;top:441.81px;width:5.6px;height:6.87px;background:#1f1f1f"></div>
<div class="a" style="left:284.2px;top:441.81px;width:5.7px;height:6.87px;background:#1f1f1f"></div>
<div class="a" style="left:256px;top:441.81px;width:24.7px;height:6.87px;background:#1d1d1d"></div>
<div class="t" style="left:257.5px;top:443px;font-size:5.43px;color:#d0d0d0">Normal</div>
<div class="a" style="left:295px;top:441.81px;width:24.6px;height:6.87px;background:#1d1d1d"></div>
<div class="t" style="left:296.8px;top:443px;font-size:5.4px;color:#d0d0d0">None</div>
<div class="a" style="left:334.4px;top:441.81px;width:41.6px;height:6.87px;background:#1d1d1d"></div>
<div class="t" style="left:336.2px;top:443px;font-size:5.4px;color:#d0d0d0">None</div>
<div class="t" style="left:383px;top:444px;font-size:4.9px;color:#3474c0">100.0%</div>
<div class="a" style="left:41.3px;top:441.74px;width:7.2px;height:7.2px;background:#7584ee;border:.65px solid #18205a"></div>
<div class="t" style="left:52.2px;top:443px;font-size:5.4px;color:#a6a6a6;font-weight:bold">3</div>
<div class="t" style="left:75.4px;top:443px;font-size:5.5px;color:#dadada;font-weight:bold">Shape Layer 10</div>
<div class="a" style="left:0;top:457.25px;width:415.5px;height:.7px;background:#1e1e1e"></div>
<div class="a" style="left:17.6px;top:450.08px;width:5px;height:6.87px;background:#1f1f1f"></div>
<div class="a" style="left:24.6px;top:450.08px;width:5.6px;height:6.87px;background:#1f1f1f"></div>
<div class="a" style="left:225.4px;top:450.08px;width:5.4px;height:6.87px;background:#1f1f1f"></div>
<div class="a" style="left:232.4px;top:450.08px;width:5.6px;height:6.87px;background:#1f1f1f"></div>
<div class="a" style="left:239.9px;top:450.08px;width:5.6px;height:6.87px;background:#1f1f1f"></div>
<div class="a" style="left:284.2px;top:450.08px;width:5.7px;height:6.87px;background:#1f1f1f"></div>
<div class="a" style="left:256px;top:450.08px;width:24.7px;height:6.87px;background:#1d1d1d"></div>
<div class="t" style="left:257.5px;top:452px;font-size:5.43px;color:#d0d0d0">Normal</div>
<div class="a" style="left:295px;top:450.08px;width:24.6px;height:6.87px;background:#1d1d1d"></div>
<div class="t" style="left:296.8px;top:452px;font-size:5.4px;color:#d0d0d0">None</div>
<div class="a" style="left:334.4px;top:450.08px;width:41.6px;height:6.87px;background:#1d1d1d"></div>
<div class="t" style="left:336.2px;top:452px;font-size:5.4px;color:#d0d0d0">None</div>
<div class="t" style="left:383px;top:453px;font-size:4.9px;color:#3474c0">100.0%</div>
<div class="a" style="left:41.3px;top:450.01px;width:7.2px;height:7.2px;background:#7584ee;border:.65px solid #18205a"></div>
<div class="t" style="left:52.2px;top:452px;font-size:5.4px;color:#a6a6a6;font-weight:bold">4</div>
<div class="t" style="left:75.4px;top:452px;font-size:5.5px;color:#dadada;font-weight:bold">Shape Layer 7</div>
<div class="a" style="left:0;top:465.51px;width:415.5px;height:.7px;background:#1e1e1e"></div>
<div class="a" style="left:17.6px;top:458.35px;width:5px;height:6.87px;background:#1f1f1f"></div>
<div class="a" style="left:24.6px;top:458.35px;width:5.6px;height:6.87px;background:#1f1f1f"></div>
<div class="a" style="left:225.4px;top:458.35px;width:5.4px;height:6.87px;background:#1f1f1f"></div>
<div class="a" style="left:232.4px;top:458.35px;width:5.6px;height:6.87px;background:#1f1f1f"></div>
<div class="a" style="left:239.9px;top:458.35px;width:5.6px;height:6.87px;background:#1f1f1f"></div>
<div class="a" style="left:284.2px;top:458.35px;width:5.7px;height:6.87px;background:#1f1f1f"></div>
<div class="a" style="left:256px;top:458.35px;width:24.7px;height:6.87px;background:#1d1d1d"></div>
<div class="t" style="left:257.5px;top:460px;font-size:5.43px;color:#d0d0d0">Normal</div>
<div class="a" style="left:295px;top:458.35px;width:24.6px;height:6.87px;background:#1d1d1d"></div>
<div class="t" style="left:296.8px;top:460px;font-size:5.4px;color:#d0d0d0">None</div>
<div class="a" style="left:334.4px;top:458.35px;width:41.6px;height:6.87px;background:#1d1d1d"></div>
<div class="t" style="left:336.2px;top:460px;font-size:5.4px;color:#d0d0d0">None</div>
<div class="t" style="left:383px;top:461px;font-size:4.9px;color:#3474c0">100.0%</div>
<div class="a" style="left:41.3px;top:458.28px;width:7.2px;height:7.2px;background:#7584ee;border:.65px solid #18205a"></div>
<div class="t" style="left:52.2px;top:460px;font-size:5.4px;color:#a6a6a6;font-weight:bold">5</div>
<div class="t" style="left:75.4px;top:460px;font-size:5.5px;color:#dadada;font-weight:bold">Shape Layer 6</div>
<div class="a" style="left:0;top:473.78px;width:415.5px;height:.7px;background:#1e1e1e"></div>
<div class="a" style="left:17.6px;top:466.62px;width:5px;height:6.87px;background:#1f1f1f"></div>
<div class="a" style="left:24.6px;top:466.62px;width:5.6px;height:6.87px;background:#1f1f1f"></div>
<div class="a" style="left:225.4px;top:466.62px;width:5.4px;height:6.87px;background:#1f1f1f"></div>
<div class="a" style="left:232.4px;top:466.62px;width:5.6px;height:6.87px;background:#1f1f1f"></div>
<div class="a" style="left:239.9px;top:466.62px;width:5.6px;height:6.87px;background:#1f1f1f"></div>
<div class="a" style="left:284.2px;top:466.62px;width:5.7px;height:6.87px;background:#1f1f1f"></div>
<div class="a" style="left:256px;top:466.62px;width:24.7px;height:6.87px;background:#1d1d1d"></div>
<div class="t" style="left:257.5px;top:468px;font-size:5.43px;color:#d0d0d0">Normal</div>
<div class="a" style="left:295px;top:466.62px;width:24.6px;height:6.87px;background:#1d1d1d"></div>
<div class="t" style="left:296.8px;top:468px;font-size:5.4px;color:#d0d0d0">None</div>
<div class="a" style="left:334.4px;top:466.62px;width:41.6px;height:6.87px;background:#1d1d1d"></div>
<div class="t" style="left:336.2px;top:468px;font-size:5.4px;color:#d0d0d0">None</div>
<div class="t" style="left:383px;top:469px;font-size:4.9px;color:#3474c0">100.0%</div>
<div class="a" style="left:41.3px;top:466.55px;width:7.2px;height:7.2px;background:#7584ee;border:.65px solid #18205a"></div>
<div class="t" style="left:52.2px;top:468px;font-size:5.4px;color:#a6a6a6;font-weight:bold">6</div>
<div class="t" style="left:75.4px;top:468px;font-size:5.5px;color:#dadada;font-weight:bold">Shape Layer 5</div>
<div class="a" style="left:0;top:482.06px;width:415.5px;height:.7px;background:#1e1e1e"></div>
<div class="a" style="left:17.6px;top:474.89px;width:5px;height:6.87px;background:#1f1f1f"></div>
<div class="a" style="left:24.6px;top:474.89px;width:5.6px;height:6.87px;background:#1f1f1f"></div>
<div class="a" style="left:225.4px;top:474.89px;width:5.4px;height:6.87px;background:#1f1f1f"></div>
<div class="a" style="left:232.4px;top:474.89px;width:5.6px;height:6.87px;background:#1f1f1f"></div>
<div class="a" style="left:239.9px;top:474.89px;width:5.6px;height:6.87px;background:#1f1f1f"></div>
<div class="a" style="left:284.2px;top:474.89px;width:5.7px;height:6.87px;background:#1f1f1f"></div>
<div class="a" style="left:256px;top:474.89px;width:24.7px;height:6.87px;background:#1d1d1d"></div>
<div class="t" style="left:257.5px;top:476px;font-size:5.43px;color:#d0d0d0">Normal</div>
<div class="a" style="left:295px;top:474.89px;width:24.6px;height:6.87px;background:#1d1d1d"></div>
<div class="t" style="left:296.8px;top:476px;font-size:5.4px;color:#d0d0d0">None</div>
<div class="a" style="left:334.4px;top:474.89px;width:41.6px;height:6.87px;background:#1d1d1d"></div>
<div class="t" style="left:336.2px;top:476px;font-size:5.4px;color:#d0d0d0">None</div>
<div class="t" style="left:383px;top:477px;font-size:4.9px;color:#3474c0">100.0%</div>
<div class="a" style="left:41.3px;top:474.82px;width:7.2px;height:7.2px;background:#7584ee;border:.65px solid #18205a"></div>
<div class="t" style="left:52.2px;top:476px;font-size:5.4px;color:#a6a6a6;font-weight:bold">7</div>
<div class="t" style="left:75.4px;top:476px;font-size:5.5px;color:#dadada;font-weight:bold">Shape Layer 3</div>
<div class="a" style="left:0;top:490.32px;width:415.5px;height:.7px;background:#1e1e1e"></div>
<div class="a" style="left:17.6px;top:483.16px;width:5px;height:6.87px;background:#1f1f1f"></div>
<div class="a" style="left:24.6px;top:483.16px;width:5.6px;height:6.87px;background:#1f1f1f"></div>
<div class="a" style="left:225.4px;top:483.16px;width:5.4px;height:6.87px;background:#1f1f1f"></div>
<div class="a" style="left:232.4px;top:483.16px;width:5.6px;height:6.87px;background:#1f1f1f"></div>
<div class="a" style="left:239.9px;top:483.16px;width:5.6px;height:6.87px;background:#1f1f1f"></div>
<div class="a" style="left:284.2px;top:483.16px;width:5.7px;height:6.87px;background:#1f1f1f"></div>
<div class="a" style="left:256px;top:483.16px;width:24.7px;height:6.87px;background:#1d1d1d"></div>
<div class="t" style="left:257.5px;top:485px;font-size:5.43px;color:#d0d0d0">Normal</div>
<div class="a" style="left:295px;top:483.16px;width:24.6px;height:6.87px;background:#1d1d1d"></div>
<div class="t" style="left:296.8px;top:485px;font-size:5.4px;color:#d0d0d0">None</div>
<div class="a" style="left:334.4px;top:483.16px;width:41.6px;height:6.87px;background:#1d1d1d"></div>
<div class="t" style="left:336.2px;top:485px;font-size:5.4px;color:#d0d0d0">None</div>
<div class="t" style="left:383px;top:486px;font-size:4.9px;color:#3474c0">100.0%</div>
<div class="a" style="left:41.3px;top:483.09px;width:7.2px;height:7.2px;background:#7584ee;border:.65px solid #18205a"></div>
<div class="t" style="left:52.2px;top:485px;font-size:5.4px;color:#a6a6a6;font-weight:bold">8</div>
<div class="t" style="left:75.4px;top:485px;font-size:5.5px;color:#dadada;font-weight:bold">Shape Layer 2</div>
<div class="a" style="left:0;top:490.6px;width:923px;height:1.5px;background:#171717"></div>
<svg width="923" height="500" viewBox="0 0 923 500">
<text x="24.1" y="394.1" font-size="5.1" fill="#c8c8c8" style="font-family:'Liberation Sans','Noto Sans CJK SC',sans-serif">合成</text>
<path d="M3.4 428.80 q2.6 -3 5.2 0 q-2.6 3 -5.2 0 Z" fill="#e4e4e4"/><circle cx="6" cy="428.80" r="1" fill="#262626"/>
<path d="M36 427.10 l2.7 1.7 l-2.7 1.7 Z" fill="#d4d4d4"/>
<path d="M69.3 426.20 l.75 1.75 l1.9 .15 l-1.45 1.25 l.45 1.85 l-1.65 -1 l-1.65 1 l.45 -1.85 l-1.45 -1.25 l1.9 -.15 Z" fill="#dcdcdc"/>
<path d="M190.9 427.60 q0 -1.5 1.1 -1.5 q1.1 0 1.1 1.5 q1.4 .6 1.7 2.6 l.3 .9 h-6.2 l.3 -.9 q.3 -2 1.7 -2.6 Z" fill="#a4a4a4"/>
<circle cx="199.2" cy="428.80" r=".9" fill="none" stroke="#777" stroke-width=".5"/>
<path d="M204.2 431.10 L209.4 426.30" stroke="#d8d8d8" stroke-width=".9"/>
<path d="M277.2 428.00 l1.6 1.6 l1.6 -1.6" fill="none" stroke="#b0b0b0" stroke-width=".9"/>
<path d="M370.4 428.00 l1.8 1.8 l1.8 -1.8" fill="none" stroke="#b0b0b0" stroke-width=".9"/>
<circle cx="327.3" cy="428.80" r="2.2" fill="none" stroke="#6e6e6e" stroke-width=".7"/><circle cx="327.6" cy="428.80" r=".9" fill="none" stroke="#6e6e6e" stroke-width=".6"/>
<path d="M314.2 436.27 l1.7 1.7 l1.7 -1.7" fill="none" stroke="#b0b0b0" stroke-width=".9"/>
<path d="M3.4 437.07 q2.6 -3 5.2 0 q-2.6 3 -5.2 0 Z" fill="#e4e4e4"/><circle cx="6" cy="437.07" r="1" fill="#262626"/>
<path d="M36 435.37 l2.7 1.7 l-2.7 1.7 Z" fill="#d4d4d4"/>
<path d="M69.3 434.47 l.75 1.75 l1.9 .15 l-1.45 1.25 l.45 1.85 l-1.65 -1 l-1.65 1 l.45 -1.85 l-1.45 -1.25 l1.9 -.15 Z" fill="#dcdcdc"/>
<path d="M190.9 435.87 q0 -1.5 1.1 -1.5 q1.1 0 1.1 1.5 q1.4 .6 1.7 2.6 l.3 .9 h-6.2 l.3 -.9 q.3 -2 1.7 -2.6 Z" fill="#a4a4a4"/>
<circle cx="199.2" cy="437.07" r=".9" fill="none" stroke="#777" stroke-width=".5"/>
<path d="M204.2 439.37 L209.4 434.57" stroke="#d8d8d8" stroke-width=".9"/>
<text x="211.5" y="439" font-family="Liberation Serif" font-style="italic" font-weight="bold" font-size="6" fill="#c8c8c8">fx</text>
<path d="M277.2 436.27 l1.6 1.6 l1.6 -1.6" fill="none" stroke="#b0b0b0" stroke-width=".9"/>
<path d="M370.4 436.27 l1.8 1.8 l1.8 -1.8" fill="none" stroke="#b0b0b0" stroke-width=".9"/>
<circle cx="327.3" cy="437.07" r="2.2" fill="none" stroke="#6e6e6e" stroke-width=".7"/><circle cx="327.6" cy="437.07" r=".9" fill="none" stroke="#6e6e6e" stroke-width=".6"/>
<path d="M314.2 444.54 l1.7 1.7 l1.7 -1.7" fill="none" stroke="#b0b0b0" stroke-width=".9"/>
<path d="M3.4 445.34 q2.6 -3 5.2 0 q-2.6 3 -5.2 0 Z" fill="#e4e4e4"/><circle cx="6" cy="445.34" r="1" fill="#262626"/>
<path d="M36 443.64 l2.7 1.7 l-2.7 1.7 Z" fill="#d4d4d4"/>
<path d="M69.3 442.74 l.75 1.75 l1.9 .15 l-1.45 1.25 l.45 1.85 l-1.65 -1 l-1.65 1 l.45 -1.85 l-1.45 -1.25 l1.9 -.15 Z" fill="#dcdcdc"/>
<path d="M190.9 444.14 q0 -1.5 1.1 -1.5 q1.1 0 1.1 1.5 q1.4 .6 1.7 2.6 l.3 .9 h-6.2 l.3 -.9 q.3 -2 1.7 -2.6 Z" fill="#a4a4a4"/>
<circle cx="199.2" cy="445.34" r=".9" fill="none" stroke="#777" stroke-width=".5"/>
<path d="M204.2 447.64 L209.4 442.84" stroke="#d8d8d8" stroke-width=".9"/>
<text x="211.5" y="448" font-family="Liberation Serif" font-style="italic" font-weight="bold" font-size="6" fill="#c8c8c8">fx</text>
<path d="M277.2 444.54 l1.6 1.6 l1.6 -1.6" fill="none" stroke="#b0b0b0" stroke-width=".9"/>
<path d="M370.4 444.54 l1.8 1.8 l1.8 -1.8" fill="none" stroke="#b0b0b0" stroke-width=".9"/>
<circle cx="327.3" cy="445.34" r="2.2" fill="none" stroke="#6e6e6e" stroke-width=".7"/><circle cx="327.6" cy="445.34" r=".9" fill="none" stroke="#6e6e6e" stroke-width=".6"/>
<path d="M314.2 452.81 l1.7 1.7 l1.7 -1.7" fill="none" stroke="#b0b0b0" stroke-width=".9"/>
<path d="M3.4 453.61 q2.6 -3 5.2 0 q-2.6 3 -5.2 0 Z" fill="#e4e4e4"/><circle cx="6" cy="453.61" r="1" fill="#262626"/>
<path d="M36 451.91 l2.7 1.7 l-2.7 1.7 Z" fill="#d4d4d4"/>
<path d="M69.3 451.01 l.75 1.75 l1.9 .15 l-1.45 1.25 l.45 1.85 l-1.65 -1 l-1.65 1 l.45 -1.85 l-1.45 -1.25 l1.9 -.15 Z" fill="#dcdcdc"/>
<path d="M190.9 452.41 q0 -1.5 1.1 -1.5 q1.1 0 1.1 1.5 q1.4 .6 1.7 2.6 l.3 .9 h-6.2 l.3 -.9 q.3 -2 1.7 -2.6 Z" fill="#a4a4a4"/>
<circle cx="199.2" cy="453.61" r=".9" fill="none" stroke="#777" stroke-width=".5"/>
<path d="M204.2 455.91 L209.4 451.11" stroke="#d8d8d8" stroke-width=".9"/>
<text x="211.5" y="456" font-family="Liberation Serif" font-style="italic" font-weight="bold" font-size="6" fill="#c8c8c8">fx</text>
<path d="M277.2 452.81 l1.6 1.6 l1.6 -1.6" fill="none" stroke="#b0b0b0" stroke-width=".9"/>
<path d="M370.4 452.81 l1.8 1.8 l1.8 -1.8" fill="none" stroke="#b0b0b0" stroke-width=".9"/>
<circle cx="327.3" cy="453.61" r="2.2" fill="none" stroke="#6e6e6e" stroke-width=".7"/><circle cx="327.6" cy="453.61" r=".9" fill="none" stroke="#6e6e6e" stroke-width=".6"/>
<path d="M314.2 461.08 l1.7 1.7 l1.7 -1.7" fill="none" stroke="#b0b0b0" stroke-width=".9"/>
<path d="M3.4 461.88 q2.6 -3 5.2 0 q-2.6 3 -5.2 0 Z" fill="#e4e4e4"/><circle cx="6" cy="461.88" r="1" fill="#262626"/>
<path d="M36 460.18 l2.7 1.7 l-2.7 1.7 Z" fill="#d4d4d4"/>
<path d="M69.3 459.28 l.75 1.75 l1.9 .15 l-1.45 1.25 l.45 1.85 l-1.65 -1 l-1.65 1 l.45 -1.85 l-1.45 -1.25 l1.9 -.15 Z" fill="#dcdcdc"/>
<path d="M190.9 460.68 q0 -1.5 1.1 -1.5 q1.1 0 1.1 1.5 q1.4 .6 1.7 2.6 l.3 .9 h-6.2 l.3 -.9 q.3 -2 1.7 -2.6 Z" fill="#a4a4a4"/>
<circle cx="199.2" cy="461.88" r=".9" fill="none" stroke="#777" stroke-width=".5"/>
<path d="M204.2 464.18 L209.4 459.38" stroke="#d8d8d8" stroke-width=".9"/>
<path d="M277.2 461.08 l1.6 1.6 l1.6 -1.6" fill="none" stroke="#b0b0b0" stroke-width=".9"/>
<path d="M370.4 461.08 l1.8 1.8 l1.8 -1.8" fill="none" stroke="#b0b0b0" stroke-width=".9"/>
<circle cx="327.3" cy="461.88" r="2.2" fill="none" stroke="#6e6e6e" stroke-width=".7"/><circle cx="327.6" cy="461.88" r=".9" fill="none" stroke="#6e6e6e" stroke-width=".6"/>
<path d="M314.2 469.35 l1.7 1.7 l1.7 -1.7" fill="none" stroke="#b0b0b0" stroke-width=".9"/>
<path d="M3.4 470.15 q2.6 -3 5.2 0 q-2.6 3 -5.2 0 Z" fill="#e4e4e4"/><circle cx="6" cy="470.15" r="1" fill="#262626"/>
<path d="M36 468.45 l2.7 1.7 l-2.7 1.7 Z" fill="#d4d4d4"/>
<path d="M69.3 467.55 l.75 1.75 l1.9 .15 l-1.45 1.25 l.45 1.85 l-1.65 -1 l-1.65 1 l.45 -1.85 l-1.45 -1.25 l1.9 -.15 Z" fill="#dcdcdc"/>
<path d="M190.9 468.95 q0 -1.5 1.1 -1.5 q1.1 0 1.1 1.5 q1.4 .6 1.7 2.6 l.3 .9 h-6.2 l.3 -.9 q.3 -2 1.7 -2.6 Z" fill="#a4a4a4"/>
<circle cx="199.2" cy="470.15" r=".9" fill="none" stroke="#777" stroke-width=".5"/>
<path d="M204.2 472.45 L209.4 467.65" stroke="#d8d8d8" stroke-width=".9"/>
<path d="M277.2 469.35 l1.6 1.6 l1.6 -1.6" fill="none" stroke="#b0b0b0" stroke-width=".9"/>
<path d="M370.4 469.35 l1.8 1.8 l1.8 -1.8" fill="none" stroke="#b0b0b0" stroke-width=".9"/>
<circle cx="327.3" cy="470.15" r="2.2" fill="none" stroke="#6e6e6e" stroke-width=".7"/><circle cx="327.6" cy="470.15" r=".9" fill="none" stroke="#6e6e6e" stroke-width=".6"/>
<path d="M314.2 477.62 l1.7 1.7 l1.7 -1.7" fill="none" stroke="#b0b0b0" stroke-width=".9"/>
<path d="M3.4 478.42 q2.6 -3 5.2 0 q-2.6 3 -5.2 0 Z" fill="#e4e4e4"/><circle cx="6" cy="478.42" r="1" fill="#262626"/>
<path d="M36 476.72 l2.7 1.7 l-2.7 1.7 Z" fill="#d4d4d4"/>
<path d="M69.3 475.82 l.75 1.75 l1.9 .15 l-1.45 1.25 l.45 1.85 l-1.65 -1 l-1.65 1 l.45 -1.85 l-1.45 -1.25 l1.9 -.15 Z" fill="#dcdcdc"/>
<path d="M190.9 477.22 q0 -1.5 1.1 -1.5 q1.1 0 1.1 1.5 q1.4 .6 1.7 2.6 l.3 .9 h-6.2 l.3 -.9 q.3 -2 1.7 -2.6 Z" fill="#a4a4a4"/>
<circle cx="199.2" cy="478.42" r=".9" fill="none" stroke="#777" stroke-width=".5"/>
<path d="M204.2 480.72 L209.4 475.92" stroke="#d8d8d8" stroke-width=".9"/>
<path d="M277.2 477.62 l1.6 1.6 l1.6 -1.6" fill="none" stroke="#b0b0b0" stroke-width=".9"/>
<path d="M370.4 477.62 l1.8 1.8 l1.8 -1.8" fill="none" stroke="#b0b0b0" stroke-width=".9"/>
<circle cx="327.3" cy="478.42" r="2.2" fill="none" stroke="#6e6e6e" stroke-width=".7"/><circle cx="327.6" cy="478.42" r=".9" fill="none" stroke="#6e6e6e" stroke-width=".6"/>
<path d="M314.2 485.89 l1.7 1.7 l1.7 -1.7" fill="none" stroke="#b0b0b0" stroke-width=".9"/>
<path d="M3.4 486.69 q2.6 -3 5.2 0 q-2.6 3 -5.2 0 Z" fill="#e4e4e4"/><circle cx="6" cy="486.69" r="1" fill="#262626"/>
<path d="M36 484.99 l2.7 1.7 l-2.7 1.7 Z" fill="#d4d4d4"/>
<path d="M69.3 484.09 l.75 1.75 l1.9 .15 l-1.45 1.25 l.45 1.85 l-1.65 -1 l-1.65 1 l.45 -1.85 l-1.45 -1.25 l1.9 -.15 Z" fill="#dcdcdc"/>
<path d="M190.9 485.49 q0 -1.5 1.1 -1.5 q1.1 0 1.1 1.5 q1.4 .6 1.7 2.6 l.3 .9 h-6.2 l.3 -.9 q.3 -2 1.7 -2.6 Z" fill="#a4a4a4"/>
<circle cx="199.2" cy="486.69" r=".9" fill="none" stroke="#777" stroke-width=".5"/>
<path d="M204.2 488.99 L209.4 484.19" stroke="#d8d8d8" stroke-width=".9"/>
<path d="M277.2 485.89 l1.6 1.6 l1.6 -1.6" fill="none" stroke="#b0b0b0" stroke-width=".9"/>
<path d="M370.4 485.89 l1.8 1.8 l1.8 -1.8" fill="none" stroke="#b0b0b0" stroke-width=".9"/>
<circle cx="327.3" cy="486.69" r="2.2" fill="none" stroke="#6e6e6e" stroke-width=".7"/><circle cx="327.6" cy="486.69" r=".9" fill="none" stroke="#6e6e6e" stroke-width=".6"/>
<path d="M3.6 421 q2.4 -2.8 4.8 0 q-2.4 2.8 -4.8 0 Z" fill="#c8c8c8"/><circle cx="6" cy="421" r=".9" fill="#2d2d2d"/>
<path d="M11.4 419.8 h1.4 l2 -1.6 v5.6 l-2 -1.6 h-1.4 Z" fill="#c8c8c8"/><path d="M15.4 419.4 q1.2 1.6 0 3.2" stroke="#c8c8c8" stroke-width=".5" fill="none"/>
<circle cx="20.8" cy="421" r="1.45" fill="#d0d0d0"/>
<path d="M25.6 420.6 h3.8 v2.8 h-3.8 Z" fill="#c8c8c8"/><path d="M26.4 420.6 v-1 a1.1 1.1 0 0 1 2.2 0" fill="none" stroke="#c8c8c8" stroke-width=".6"/>
<path d="M40 418.6 h2.6 l3 3 l-2.4 2.4 l-3.2 -3 Z" fill="#c8c8c8"/><circle cx="41.3" cy="419.9" r=".5" fill="#2d2d2d"/>
<path d="M190.9 419.9 q0 -1.5 1.1 -1.5 q1.1 0 1.1 1.5 q1.4 .6 1.7 2.6 l.3 .9 h-6.2 l.3 -.9 q.3 -2 1.7 -2.6 Z" fill="#8e8e8e"/>
<path d="M199.4 418.4 l.7 1.9 l1.9 .7 l-1.9 .7 l-.7 1.9 l-.7 -1.9 l-1.9 -.7 l1.9 -.7 Z" fill="#9a9a9a"/>
<path d="M203.6 418.4 L208.8 423.4" stroke="#aaa" stroke-width=".8"/>
<text x="211.3" y="423.2" font-family="Liberation Serif" font-style="italic" font-weight="bold" font-size="6" fill="#a8a8a8">fx</text>
<rect x="218.2" y="418.4" width="5.4" height="5" fill="#9a9a9a"/><path d="M218.2 420.2 h5.4 M218.2 421.8 h5.4" stroke="#2d2d2d" stroke-width=".4"/>
<circle cx="227.2" cy="421.4" r="1.8" fill="none" stroke="#9a9a9a" stroke-width=".7"/><circle cx="228.8" cy="420.4" r="1.8" fill="none" stroke="#9a9a9a" stroke-width=".7"/>
<circle cx="235.4" cy="421" r="2.2" fill="#a8a8a8"/><path d="M235.4 418.8 a2.2 2.2 0 0 1 0 4.4 Z" fill="#2d2d2d"/>
<circle cx="242.9" cy="421" r="2.3" fill="none" stroke="#9a9a9a" stroke-width=".7"/><path d="M242.9 419 v2 l-1.6 1.2 M242.9 421 l1.6 1.2" stroke="#9a9a9a" stroke-width=".6" fill="none"/>
<path d="M44.9 390.6 h3.4 M44.9 392 h3.4 M44.9 393.4 h3.4" stroke="#8a8a8a" stroke-width=".6"/>
<circle cx="58.6" cy="405.8" r="1.7" fill="none" stroke="#c8c8c8" stroke-width=".8"/><path d="M57.4 407.2 L55.4 409.4" stroke="#c8c8c8" stroke-width=".9"/><path d="M60.8 408 l.8 .8 l.8 -.8" fill="none" stroke="#c8c8c8" stroke-width=".5"/>
<g fill="none" stroke="#c8c8c8" stroke-width=".9"><path d="M325.6 405.2 h5.4 M328.6 403.6 l2.4 1.6 l-2.4 1.6 M329 407.4 l4.4 2.6"/><rect x="331.4" y="408.4" width="2" height="2" fill="#c8c8c8" stroke="none"/><circle cx="343.4" cy="404.8" r="1.5" fill="#c8c8c8"/><ellipse cx="347.5" cy="408.2" rx="2.5" ry="1.9" stroke-width="1.1"/><path d="M359 410.2 v-3.6 l3 -2.4 l3 2.4 v3.6 Z" fill="#bdbdbd"/><path d="M361 410 v-2.4 M363 410 v-2.4" stroke="#232323" stroke-width=".6"/><rect x="371.4" y="405.8" width="4.4" height="4.6" fill="#c8c8c8"/><rect x="373.4" y="404" width="4.6" height="4.6" fill="#9a9a9a"/><ellipse cx="387.5" cy="406.8" rx="3.9" ry="2.2" transform="rotate(-38 387.5 406.8)" stroke-width=".8" fill="#8c8c8c"/><rect x="400.4" y="404" width="7" height="6.4" stroke-width=".9"/><path d="M401.6 405.2 l3.4 3 M405 408.2 v-1.8 M405 408.2 h-1.8" stroke-width=".7"/></g>
<g fill="none" stroke="#2f6cae" stroke-width=".9"><circle cx="5" cy="495.4" r="1.9"/><circle cx="6.4" cy="496.6" r="1.9"/><circle cx="15.2" cy="496" r="2.2"/><circle cx="15.2" cy="496" r=".8"/><path d="M21.6 494 q-1.2 2 0 4 M25.4 494 q1.2 2 0 4 M23.5 493.6 v4.8"/></g>
</svg>

<svg width="923" height="500" viewBox="0 0 923 500">
<g>
<path d="M674.6 461.2 L676.2 466.2 L682.4 462.6 Z" fill="#f3f4f9"/>
<ellipse cx="685" cy="452.9" rx="12.5" ry="10.5" fill="#f3f4f9"/>
<ellipse cx="697.4" cy="462" rx="12" ry="10.5" fill="#556199"/>
<path d="M706.4 468.6 L705 473 L700 470.4 Z" fill="#f3f4f9"/>
<ellipse cx="697.4" cy="462" rx="10.7" ry="9.2" fill="#f3f4f9"/>
<circle cx="680.4" cy="449.9" r="1.35" fill="#2a2c3c"/>
<circle cx="690.5" cy="449.9" r="1.35" fill="#2a2c3c"/>
<circle cx="693.4" cy="458.6" r="1.2" fill="#2a2c3c"/>
<circle cx="701.3" cy="458.6" r="1.2" fill="#2a2c3c"/>
</g>
<text x="713.4" y="467.6" font-size="22.3" fill="#ffffff" stroke="#ffffff" stroke-width=".35" style="font-family:'Liberation Sans','Noto Sans CJK SC',sans-serif">风的城电影工作室</text>
<path d="M924.7 458.0 L922.1 459.1 L923.8 460.7 L920.6 461.1 L921.1 462.9 L917.9 462.7 L917.1 464.5 L914.3 463.5 L912.4 465.0 L910.5 463.5 L907.7 464.5 L906.9 462.7 L903.7 462.9 L904.2 461.1 L901.0 460.7 L902.7 459.1 L900.1 458.0 L902.7 456.9 L901.0 455.3 L904.2 454.9 L903.7 453.1 L906.9 453.3 L907.7 451.5 L910.5 452.5 L912.4 451.0 L914.3 452.5 L917.1 451.5 L917.9 453.3 L921.1 453.1 L920.6 454.9 L923.8 455.3 L922.1 456.9Z" fill="#fff4f4" stroke="#f6a8b4" stroke-width=".7"/>
<text x="903.7" y="459.6" font-size="4.25" font-weight="bold" fill="#e01818" style="font-family:'Liberation Sans','Noto Sans CJK SC',sans-serif">点我加速</text>
<path d="M904.8 472.6 l2.2 2.2 m0 -2.2 l-2.2 2.2" stroke="#d23434" stroke-width=".9"/>
<path d="M907.8 481 q1 -3 4 -4.5 q-1.5 -3 -.5 -5.5 q2 -3.5 5 -3 q1.5 -2.5 4 -2.2 l3 .4 v21 h-9 q-3 -.5 -4 -3 q-3 -.5 -2.5 -3.2 Z" fill="#2fdc46"/>
<path d="M912 476.4 q3 1.2 5 4 M914 470 q2 .6 3 2.4" stroke="#1c9a30" stroke-width=".8" fill="none"/>
<circle cx="918.6" cy="467.4" r=".7" fill="#1a4a20"/><circle cx="914.6" cy="469.2" r=".6" fill="#1a4a20"/>
<circle cx="922.2" cy="487.8" r="7.5" fill="#e82222" stroke="#f4b0ac" stroke-width=".9"/>
<rect x="917.6" y="485.6" width="6" height="3.8" fill="#f6d0cc" opacity=".9"/>
</svg>
</div>
</body>
</html>
